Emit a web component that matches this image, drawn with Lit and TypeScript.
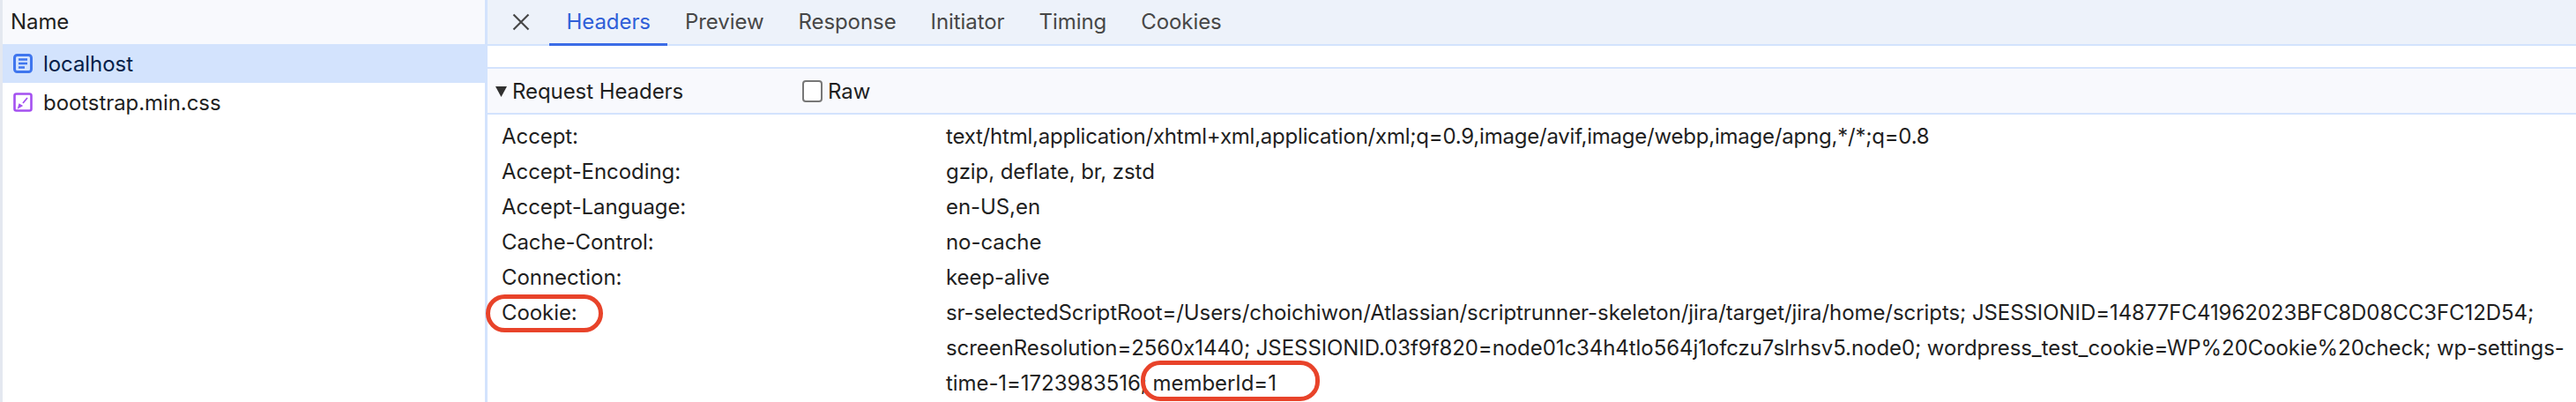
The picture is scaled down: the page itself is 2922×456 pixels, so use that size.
import { LitElement, css, html } from "lit";
import { customElement } from "lit/decorators.js";

const headers = [
  { name: "Accept:", lines: ["text/html,application/xhtml+xml,application/xml;q=0.9,image/avif,image/webp,image/apng,*/*;q=0.8"], tracking: -0.22 },
  { name: "Accept-Encoding:", lines: ["gzip, deflate, br, zstd"] },
  { name: "Accept-Language:", lines: ["en-US,en"] },
  { name: "Cache-Control:", lines: ["no-cache"] },
  { name: "Connection:", lines: ["keep-alive"] },
  {
    name: "Cookie:",
    lines: [
      "sr-selectedScriptRoot=/Users/choichiwon/Atlassian/scriptrunner-skeleton/jira/target/jira/home/scripts; JSESSIONID=14877FC41962023BFC8D08CC3FC12D54;",
      "screenResolution=2560x1440; JSESSIONID.03f9f820=node01c34h4tlo564j1ofczu7slrhsv5.node0; wordpress_test_cookie=WP%20Cookie%20check; wp-settings-",
      "time-1=1723983516; memberId=1",
    ],
  },
];

const tabs = ["Headers", "Preview", "Response", "Initiator", "Timing", "Cookies"];

@customElement("app-root")
export class AppRoot extends LitElement {
  render() {
    return html`
      <aside class="sidebar">
        <div class="name-head">Name</div>
        <div class="file selected">
          <svg class="icon" viewBox="0 0 22 22" fill="none" stroke="#3f76ee">
            <rect x="1.5" y="1.5" width="19" height="19" rx="3" stroke-width="3" />
            <path d="M6 6.5h10M6 11h10M6 15.5h7" stroke-width="2.4" />
          </svg>
          <span>localhost</span>
        </div>
        <div class="file">
          <svg class="icon" viewBox="0 0 22 22" fill="none" stroke="#a450f0">
            <rect x="1.5" y="1.5" width="19" height="19" rx="2" stroke-width="2.6" />
            <path d="M16 6l-5 6" stroke-width="1.8" />
            <path d="M6 17l1-3.6 2.6 1.6z" fill="#a450f0" stroke-width="1.6" />
          </svg>
          <span>bootstrap.min.css</span>
        </div>
      </aside>
      <main class="detail">
        <nav class="tabs">
          <svg class="close" viewBox="0 0 20 20" fill="none" stroke="#474747" stroke-width="2.2">
            <path d="M1.5 1.5l17 17M18.5 1.5l-17 17" />
          </svg>
          ${tabs.map((t, i) => html`<div class="tab ${i === 0 ? "active" : ""}">${t}</div>`)}
        </nav>
        <div class="spacer"></div>
        <div class="section-head">
          <div class="title">
            <svg class="caret" viewBox="0 0 13 13"><path d="M0 1h13L6.5 13z" fill="#303030" /></svg>
            <span>Request Headers</span>
          </div>
          <div class="raw"><span class="checkbox"></span><span>Raw</span></div>
        </div>
        <div class="rows">
          ${headers.map(
            (h) => html`
              <div class="row">
                <div class="key">${h.name}</div>
                <div class="value" style=${h.tracking ? `letter-spacing:${h.tracking}px` : ""}>
                  ${h.lines.map((l) => html`<div class="line">${l}</div>`)}
                </div>
              </div>
            `
          )}
        </div>
      </main>
      <div class="oval cookie"></div>
      <div class="oval member"></div>
    `;
  }

  static styles = css`
    :host {
      display: flex;
      position: relative;
      width: 2922px;
      height: 456px;
      overflow: hidden;
      background: #ffffff;
      font-family: Inter, "Liberation Sans", Arial, sans-serif;
      font-size: 24px;
      letter-spacing: -0.07px;
      font-feature-settings: "calt" 0;
      color: #1f1f1f;
    }

    .sidebar {
      width: 547px;
      margin-left: 3px;
      box-shadow: -3px 0 0 #e4e8f0;
      display: flex;
      flex-direction: column;
    }

    .name-head {
      height: 50px;
      padding: 0 0 2px 9px;
      box-sizing: border-box;
      display: flex;
      align-items: center;
      background: #f8f9fd;
    }

    .file {
      height: 44px;
      padding-left: 12px;
      display: flex;
      align-items: center;
      gap: 12px;
    }

    .file.selected {
      background: #d3e3fd;
      color: #041e49;
    }

    .icon {
      width: 22px;
      height: 22px;
      flex: none;
    }

    .detail {
      flex: 1;
      min-width: 0;
      border-left: 3px solid #d3e3fd;
      display: flex;
      flex-direction: column;
    }

    .tabs {
      height: 50px;
      background: #edf2fa;
      border-bottom: 2px solid #d3e3fd;
      display: flex;
      align-items: stretch;
      padding-left: 28px;
      color: #474747;
    }

    .close {
      width: 20px;
      height: 20px;
      align-self: center;
      margin-right: 22px;
    }

    .tab {
      padding: 0 19.5px 2px;
      display: flex;
      align-items: center;
    }

    .tab.active {
      color: #2f5fd8;
      box-shadow: inset 0 -3px 0 #3b6ce6;
      margin-bottom: -2px;
      padding-bottom: 4px;
    }

    .spacer {
      height: 24px;
      border-bottom: 2px solid #d3e3fd;
    }

    .section-head {
      height: 50px;
      background: #f8f9fd;
      border-bottom: 2px solid #d3e3fd;
      display: flex;
      align-items: center;
      padding-left: 9px;
    }

    .title {
      width: 348px;
      display: flex;
      align-items: center;
      gap: 6px;
    }

    .caret {
      width: 13px;
      height: 13px;
    }

    .raw {
      display: flex;
      align-items: center;
      gap: 6px;
    }

    .checkbox {
      width: 19px;
      height: 21px;
      border: 2px solid #777777;
      border-radius: 4px;
      background: #ffffff;
    }

    .rows {
      padding-top: 5px;
    }

    .row {
      display: grid;
      grid-template-columns: 504px 1fr;
      padding-left: 16px;
    }

    .line,
    .key {
      height: 40px;
      line-height: 40px;
      white-space: nowrap;
    }

    .oval {
      position: absolute;
      border: 5px solid #e8432a;
      border-radius: 22px;
      box-sizing: border-box;
    }

    .oval.cookie {
      left: 551px;
      top: 334px;
      width: 133px;
      height: 43px;
    }

    .oval.member {
      left: 1294px;
      top: 409px;
      width: 203px;
      height: 46px;
    }
  `;
}
